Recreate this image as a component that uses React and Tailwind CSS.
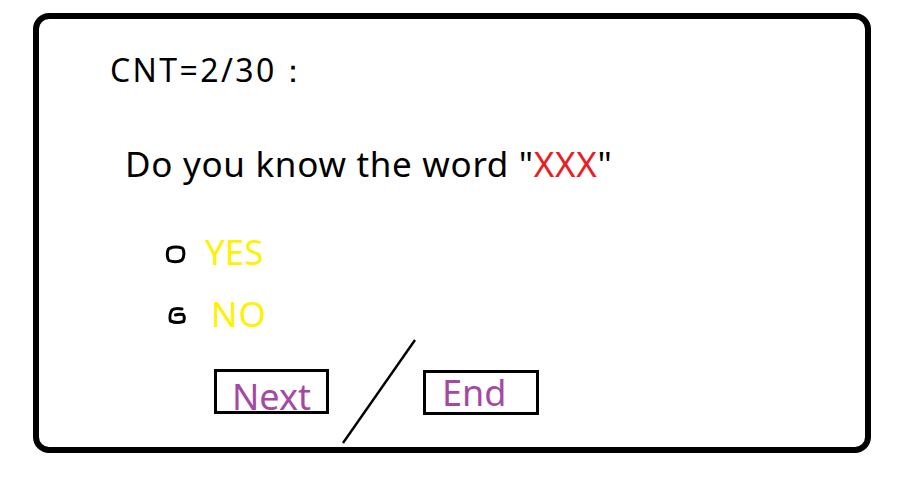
export default function App() {
  const font = { fontFamily: '"Noto Sans", "Open Sans", sans-serif' };

  return (
    <div className="w-[897px] h-[484px] bg-white pt-[13px] pl-[33px]" style={font}>
      <div className="w-[838px] h-[440px] border-[6px] border-black rounded-[16px] flex flex-col">
        {/* Counter */}
        <div className="mt-[35px] ml-[71px] text-[32px] leading-none tracking-[2.4px] text-black">
          CNT=2/30：
        </div>

        {/* Question */}
        <div className="mt-[60px] ml-[86px] text-[35px] leading-none tracking-[0.7px] text-black">
          Do you know the word "<span className="text-[#ed1c24]">XXX</span>"
        </div>

        {/* Options */}
        <div className="mt-[53px] ml-[126px] flex items-start">
          <svg width="21" height="19" viewBox="0 0 21 19" className="mt-[11px]">
            <path
              d="M5 3 C8 1.5 14 1.5 17 3 C19.5 4.5 19.5 12 17 15 C14 17.5 7 17 4 15.5 C2 13.5 2 8 3 5 C3.5 3.5 4.5 3 6 3"
              fill="none"
              stroke="black"
              strokeWidth="3"
              strokeLinecap="round"
            />
          </svg>
          <span className="ml-[19px] text-[35px] leading-none text-[#fff200]">YES</span>
        </div>

        <div className="mt-[27px] ml-[128px] flex items-start">
          <svg width="20" height="19" viewBox="0 0 20 19" className="mt-[10px]">
            <path
              d="M15 3 C11 2 7 2.5 5 4 C3 7 2.5 12 3.5 15 C7 16.5 13 16.5 16.5 15.5 C17.5 13 17.5 10 16 8.5 C13 8 10 8.5 8.5 9"
              fill="none"
              stroke="black"
              strokeWidth="3"
              strokeLinecap="round"
            />
          </svg>
          <span className="ml-[24px] text-[35px] leading-none tracking-[1px] text-[#fff200]">NO</span>
        </div>

        {/* Buttons */}
        <div className="mt-[8px] ml-[175px] flex items-start">
          <div className="mt-[30px] w-[115px] h-[45px] border-[3px] border-black pl-[15px] pt-[7px]">
            <span className="text-[36px] leading-none text-[#a349a4]">Next</span>
          </div>
          <svg width="76" height="106" viewBox="0 0 76 106" className="ml-[12px]">
            <line x1="74" y1="1" x2="2" y2="104" stroke="black" strokeWidth="2.4" />
          </svg>
          <div className="ml-[6px] mt-[31px] w-[116px] h-[45px] border-[3px] border-black pl-[16px] pt-[2px]">
            <span className="text-[36px] leading-none text-[#a349a4]">End</span>
          </div>
        </div>
      </div>
    </div>
  );
}
